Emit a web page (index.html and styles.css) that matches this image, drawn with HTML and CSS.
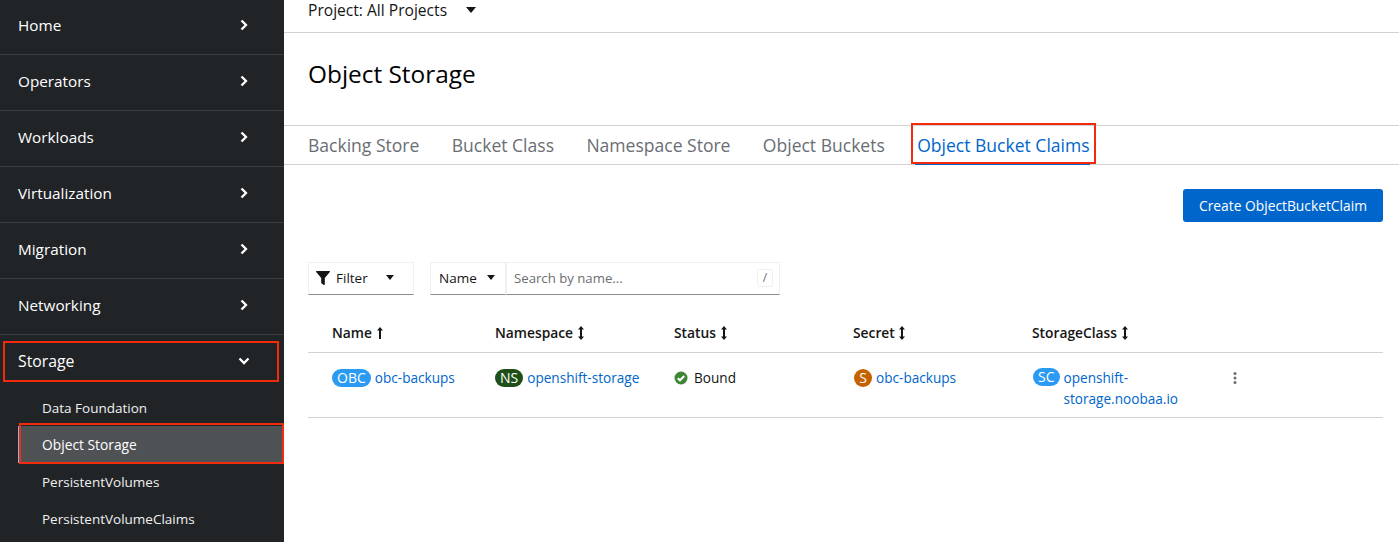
FILE: index.html
```html
<!DOCTYPE html>
<html lang="en">
<head>
<meta charset="utf-8">
<title>Object Storage</title>
<link rel="stylesheet" href="styles.css">
</head>
<body>
<div class="app">
  <nav class="side">
    <a class="nav first"><span>Home</span><svg class="chev" viewBox="0 0 10 12"><path d="M2.5 1.5 7 6l-4.500 4.500" /></svg></a>
    <a class="nav"><span>Operators</span><svg class="chev" viewBox="0 0 10 12"><path d="M2.500 1.500 7 6l-4.500 4.500" /></svg></a>
    <a class="nav"><span>Workloads</span><svg class="chev" viewBox="0 0 10 12"><path d="M2.500 1.500 7 6l-4.500 4.500" /></svg></a>
    <a class="nav"><span>Virtualization</span><svg class="chev" viewBox="0 0 10 12"><path d="M2.500 1.500 7 6l-4.500 4.500" /></svg></a>
    <a class="nav"><span>Migration</span><svg class="chev" viewBox="0 0 10 12"><path d="M2.500 1.500 7 6l-4.500 4.500" /></svg></a>
    <a class="nav"><span>Networking</span><svg class="chev" viewBox="0 0 10 12"><path d="M2.500 1.500 7 6l-4.500 4.500" /></svg></a>
    <a class="nav open"><span>Storage</span><svg class="chev down" viewBox="0 0 12 10"><path d="M1.500 2.500 6 7l4.500-4.500" /></svg><i class="mark mark-storage"></i></a>
    <div class="subnav">
      <a class="sub">Data Foundation</a>
      <a class="sub current">Object Storage<i class="mark mark-current"></i></a>
      <a class="sub">PersistentVolumes</a>
      <a class="sub">PersistentVolumeClaims</a>
    </div>
  </nav>
  <main class="main">
    <div class="project"><span>Project: All Projects</span><i class="caret"></i></div>
    <h1 class="title">Object Storage</h1>
    <div class="tabs">
      <a class="tab">Backing Store</a>
      <a class="tab">Bucket Class</a>
      <a class="tab">Namespace Store</a>
      <a class="tab">Object Buckets</a>
      <a class="tab active">Object Bucket Claims<i class="mark mark-tab"></i></a>
    </div>
    <div class="actions"><button class="primary">Create ObjectBucketClaim</button></div>
    <div class="toolbar">
      <div class="filter">
        <svg class="funnel" viewBox="0 0 14 14"><path d="M.6 0h12.800c.5 0 .8.600.4 1L8.800 7v6.300c0 .6-.6.900-1.100.6L5.500 12.300a.7.700 0 0 1-.3-.6V7L.2 1C-.2.600.1 0 .6 0z"/></svg>
        <span>Filter</span><i class="caret small"></i>
      </div>
      <div class="search">
        <div class="name-select"><span>Name</span><i class="caret small"></i></div>
        <div class="search-input"><span>Search by name...</span><kbd class="slash">/</kbd></div>
      </div>
    </div>
    <table class="grid">
      <thead>
        <tr>
          <th>Name <svg class="sort" viewBox="0 0 8 14"><path d="M4 1 7 4.500H5V13H3V4.500H1z"/></svg></th>
          <th>Namespace <svg class="sort" viewBox="0 0 8 14"><path d="M4 0 7 3.500H5v7h2l-3 3.500-3-3.500h2v-7H1z"/></svg></th>
          <th>Status <svg class="sort" viewBox="0 0 8 14"><path d="M4 0 7 3.500H5v7h2l-3 3.500-3-3.500h2v-7H1z"/></svg></th>
          <th>Secret <svg class="sort" viewBox="0 0 8 14"><path d="M4 0 7 3.500H5v7h2l-3 3.500-3-3.500h2v-7H1z"/></svg></th>
          <th>StorageClass <svg class="sort" viewBox="0 0 8 14"><path d="M4 0 7 3.500H5v7h2l-3 3.500-3-3.500h2v-7H1z"/></svg></th>
          <th></th>
        </tr>
      </thead>
      <tbody>
        <tr>
          <td><span class="badge obc">OBC</span><a class="link">obc-backups</a></td>
          <td><span class="badge ns">NS</span><a class="link">openshift-storage</a></td>
          <td class="status"><svg class="ok" viewBox="0 0 14 14"><circle cx="7" cy="7" r="6.500"/><path d="M3.800 7.200 6 9.300l4.200-4.300"/></svg>Bound</td>
          <td><span class="badge sec">S</span><a class="link">obc-backups</a></td>
          <td><div class="wrapcell"><span class="badge sc">SC</span><a class="link">openshift-storage.noobaa.io</a></div></td>
          <td class="kebab-cell"><svg class="kebab" viewBox="0 0 4 14"><circle cx="2" cy="2.500" r="1.500"/><circle cx="2" cy="7" r="1.500"/><circle cx="2" cy="11.500" r="1.500"/></svg></td>
        </tr>
      </tbody>
    </table>
  </main>
</div>
</body>
</html>
```
FILE: styles.css
```css
* { box-sizing: border-box; }
html, body { margin: 0; padding: 0; height: 100%; overflow: hidden; }
body { font-family: "Open Sans", "Liberation Sans", sans-serif; color: #151515; background: #fff; }
.app { display: flex; height: 542px; }

.side { width: 284px; flex: none; background: #212427; color: #fff; }
.nav { position: relative; display: flex; align-items: center; justify-content: space-between; height: 56px; padding: 0 35px 4px 18px; border-bottom: 1px solid #3c3f42; font-size: 15.300px; }
.nav.first { height: 55px; }
.nav.open { border-bottom: 0; height: 54px; padding-bottom: 2px; font-size: 15.800px; }
.chev { width: 10px; height: 12px; fill: none; stroke: #fff; stroke-width: 2.300; }
.chev.down { width: 12px; height: 10px; margin-right: -1px; }
.subnav { display: flex; flex-direction: column; }
.sub { position: relative; display: flex; align-items: center; height: 37px; margin-left: 18px; padding-left: 24px; font-size: 13.500px; color: #f0f0f0; }
.sub.current { background: #4f5255; border-left: 1px solid #73bcf7; padding-left: 23px; color: #fff; font-size: 13.800px; }
.mark { position: absolute; border: 2px solid #f32a0c; pointer-events: none; }
.mark-storage { left: 3px; top: 6px; width: 276px; height: 41px; }
.mark-current { left: 0; top: -3px; width: 265px; height: 41px; }
.mark-tab { left: -4px; top: -3px; width: 185px; height: 41px; }

.main { flex: 1; min-width: 0; display: flex; flex-direction: column; }
.project { display: flex; align-items: center; gap: 19px; height: 33px; padding: 0 0 12px 24px; border-bottom: 1px solid #d2d2d2; font-size: 15.600px; }
.caret { width: 0; height: 0; border: 5.500px solid transparent; border-top: 6px solid #151515; border-bottom: 0; }
.caret.small { border-width: 4.500px; border-top-width: 5px; border-bottom: 0; }
.title { margin: 0; height: 92px; padding: 26px 0 0 24px; font-size: 24.400px; font-weight: 500; line-height: 30px; color: #000; }
.tabs { display: flex; gap: 32.400px; height: 40px; padding-left: 24px; border-top: 1px solid #d2d2d2; border-bottom: 1px solid #d2d2d2; }
.tab { position: relative; display: flex; align-items: center; height: 39px; padding-bottom: 2px; font-size: 17.550px; color: #6a6e73; white-space: nowrap; }
.tab.active { margin-left: -2px; padding-left: 2px; color: #06c; box-shadow: inset 0 -2px 0 #06c; }
.actions { display: flex; justify-content: flex-end; padding: 24px 16px 0 0; }
.primary { height: 33px; width: 200px; padding: 0; border: 0; border-radius: 3px; background: #06c; color: #fff; font: inherit; font-size: 13.800px; }
.toolbar { display: flex; gap: 16px; margin: 40px 0 0 24px; height: 33px; font-size: 13.500px; }
.filter, .name-select, .search-input { display: flex; align-items: center; padding-bottom: 2px; border: 1px solid #f0f0f0; border-bottom-color: #8a8d90; }
.filter { width: 106px; padding-left: 7px; }
.funnel { width: 14px; height: 14px; fill: #151515; margin-right: 6px; }
.filter .caret { margin-left: 18px; }
.search { display: flex; width: 350px; }
.name-select { width: 76px; padding-left: 8px; gap: 11px; }
.name-select span { margin-right: -1px; }
.search-input { flex: 1; padding-left: 7px; padding-right: 6px; color: #6a6e73; justify-content: space-between; font-size: 13.200px; }
.slash { width: 16px; height: 18px; border: 1px solid #f0f0f0; border-radius: 2px; font: inherit; font-size: 12px; text-align: center; line-height: 16px; }

.grid { width: 1075px; margin: 24px 0 0 24px; border-collapse: collapse; table-layout: fixed; font-size: 13.600px; }
.grid th { height: 33px; padding: 0 0 5px 8px; border-bottom: 1px solid #d2d2d2; text-align: left; font-size: 13.800px; font-weight: 600; white-space: nowrap; width: 179px; }
.grid th:first-child, .grid td:first-child { padding-left: 24px; }
.grid th:last-child { width: auto; }
.sort { width: 8px; height: 14px; fill: #151515; vertical-align: -2px; }
.grid td { height: 65px; padding: 14px 8px 0; border-bottom: 1px solid #d2d2d2; vertical-align: top; line-height: 21px; }
.badge { display: inline-block; height: 18px; min-width: 18px; padding: 0 5px; border-radius: 9px; margin-right: 4px; color: #fff; text-align: center; font-size: 14px; line-height: 18px; vertical-align: 0; }
.obc, .sc { background: #2b9af3; }
.ns { background: #1e4f18; }
.sec { background: #c46100; padding: 0; margin-left: 1px; }
.sc { margin: 1px 4px 0 1px; flex: none; }
.link { color: #06c; }
.wrapcell { display: flex; align-items: flex-start; }
.wrapcell .link { width: 112px; }
.status { white-space: nowrap; }
.ok { width: 14px; height: 14px; margin-right: 6px; vertical-align: -2px; }
.ok circle { fill: #3e8635; }
.ok path { fill: none; stroke: #fff; stroke-width: 2; }
.grid td.kebab-cell { padding-left: 29px; padding-top: 16px; }
.kebab { width: 6px; height: 14px; fill: #6a6e73; }
```
